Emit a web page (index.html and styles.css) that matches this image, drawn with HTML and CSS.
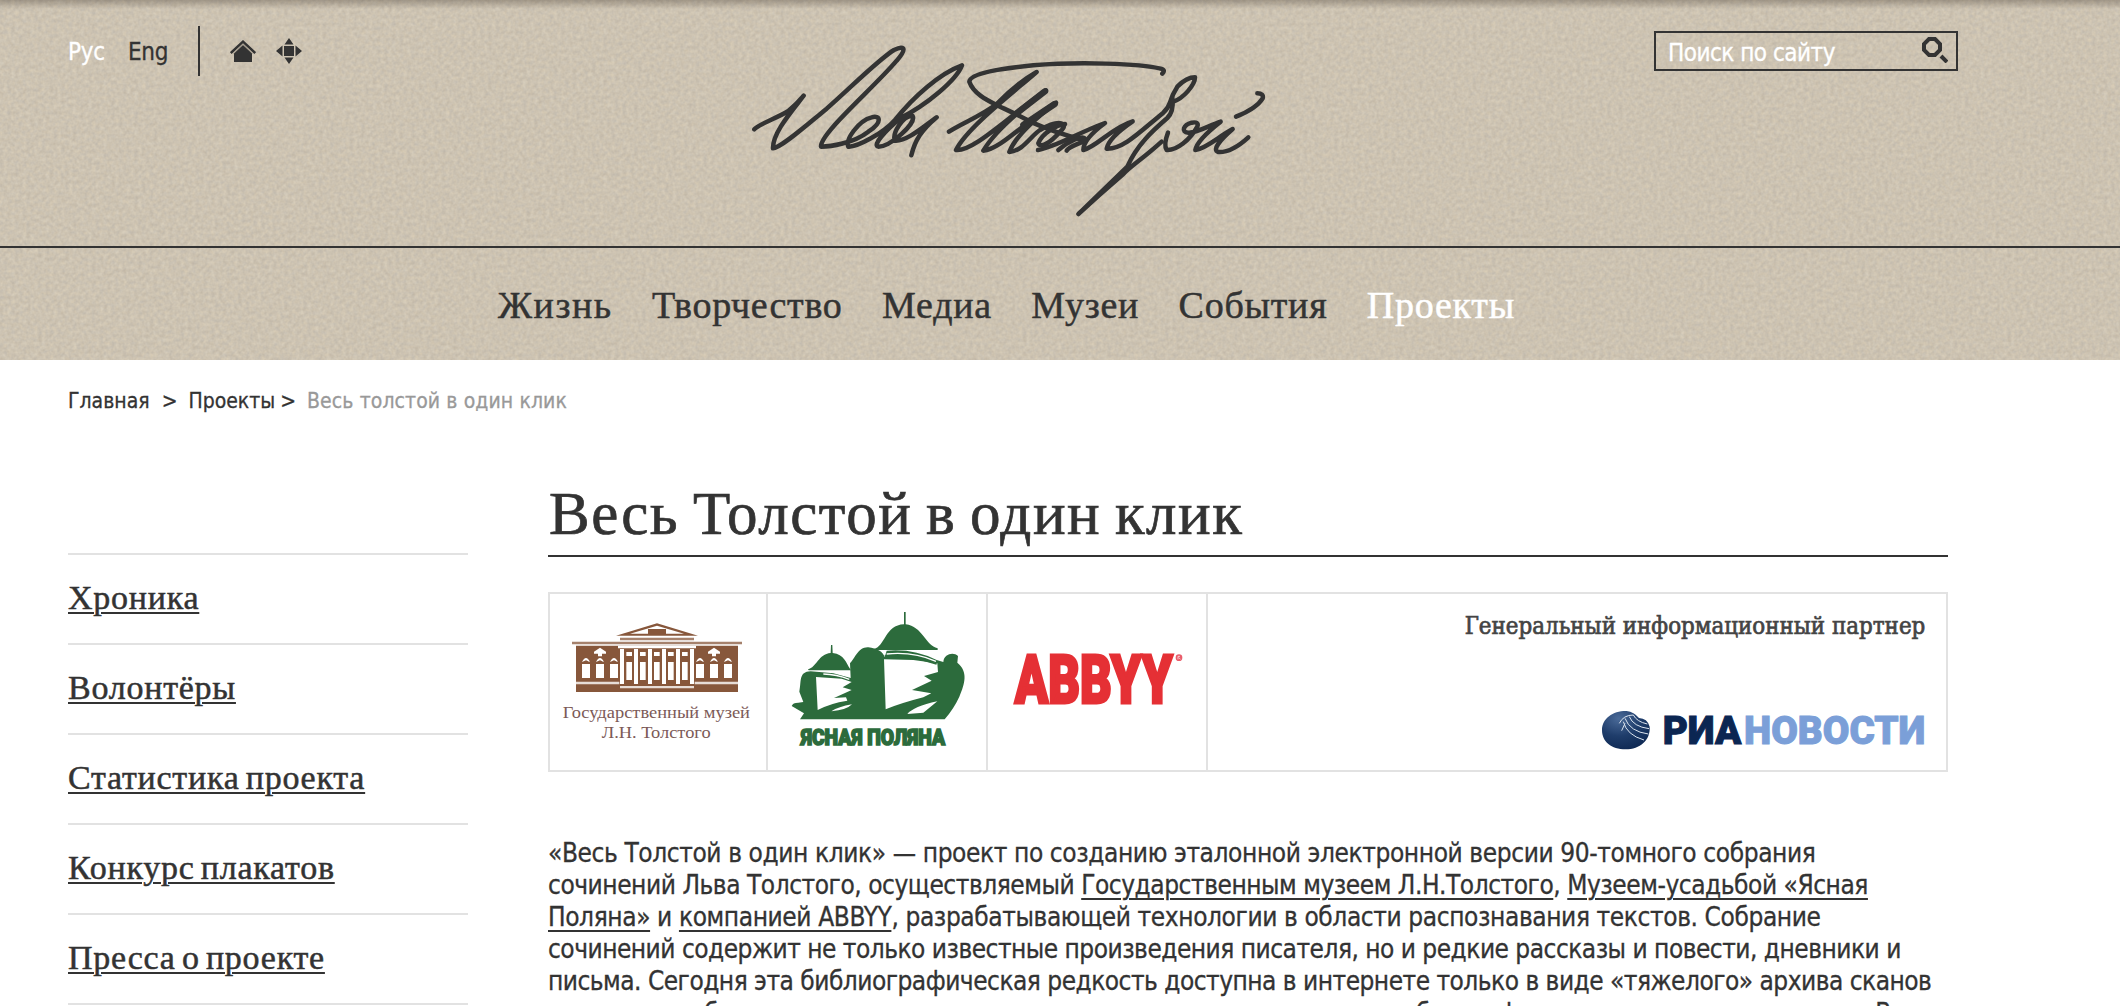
FILE: index.html
```html
<!DOCTYPE html>
<html lang="ru">
<head>
<meta charset="utf-8">
<title>Весь Толстой в один клик</title>
<link rel="stylesheet" href="styles.css">
</head>
<body>
<header class="header">
  <svg class="paper" aria-hidden="true">
    <filter id="grain" x="0" y="0" width="100%" height="100%" color-interpolation-filters="sRGB">
      <feTurbulence type="fractalNoise" baseFrequency="0.26" numOctaves="2" seed="4"/>
      <feColorMatrix values="0.12 0 0 0 0.742  0.11 0.02 0 0 0.699  0.08 0.05 0 0 0.632  0 0 0 0 1"/>
    </filter>
    <rect width="100%" height="100%" filter="url(#grain)"/>
  </svg>
  <div class="top">
    <div class="tools">
      <a class="lang lang-on">Рус</a>
      <a class="lang lang-en">Eng</a>
      <span class="split"></span>
      <svg class="ico-home" viewBox="0 0 26 22"><path d="M4 13.5 13 5l9 8.5V22H4z" fill="#333"/><path d="M.8 13 13 1.6 25.200 13" fill="none" stroke="#333" stroke-width="2.400"/><path d="M3 13.500 13 4.200 23 13.500" fill="none" stroke="#a39a8c" stroke-width="1"/></svg>
      <svg class="ico-map" viewBox="0 0 26 26" fill="#333"><path d="M8 8h10v10H8zM8.500 6.500 13 0l4.500 6.500zM8.500 19.500 13 26l4.500-6.500zM6.500 7.500v11L0 13zM19.500 7.500v11L26 13z"/></svg>
    </div>
    <svg class="signature" viewBox="0 0 1620 600" fill="none" stroke="#333" stroke-width="13.500" stroke-linecap="round" stroke-linejoin="round">
      <path d="M43 298C52 284 110 265 145 243Q170 222 191 197C150 250 98 310 99 355C125 352 200 285 260 236C340 165 420 85 462 60C500 42 497 62 470 92C400 175 240 310 243 350C270 350 340 340 385 305C430 275 420 255 395 262C355 272 315 330 325 350C350 352 430 310 465 270C520 200 600 130 666 106C650 150 560 225 480 265C440 300 395 345 415 350C450 350 530 280 518 258C490 255 455 310 465 332C500 335 550 290 590 262C545 300 525 330 514 376"/>
      <path d="M1267 131Q1278 120 1262 116C1200 100 1010 95 880 106C780 116 690 130 688 155C700 190 740 210 770 225S850 262 870 275Q950 310 1030 330"/>
      <path d="M627 305C665 280 720 260 770 222Q830 160 890 126C810 195 680 295 648 360C700 365 800 265 918 181C840 240 760 310 730 362C780 360 860 270 948 218C880 270 825 320 808 366C850 362 870 320 900 300C960 265 990 280 960 305C930 340 900 355 895 340C905 310 950 285 975 282"/>
      <path d="M894 360C950 350 1010 310 1095 279C1060 305 1030 335 1030 360C1070 350 1120 290 1178 274C1140 300 1105 330 1100 356C1150 358 1200 305 1270 248C1300 220 1280 220 1312 170Q1340 142 1365 142C1365 165 1330 205 1300 215"/>
      <path d="M955 360C990 330 1030 315 1035 326S990 345 980 362"/>
      <path d="M1297 205Q1302 245 1282 264C1240 300 1190 345 1162 410Q1100 470 1015 552Q1080 492 1150 432C1170 410 1210 385 1265 335"/>
      <path d="M1284 308Q1270 345 1280 360C1310 362 1350 330 1372 290Q1378 274 1355 278C1330 285 1322 306 1345 308S1410 285 1442 275C1410 300 1370 335 1366 360C1400 355 1435 320 1478 297C1440 330 1415 360 1435 366C1470 368 1500 345 1525 322M1488 260Q1550 235 1568 205Q1572 190 1552 190"/>
      <path d="M830 250 915 184M850 285 944 222" stroke-width="19"/>
    </svg>
    <div class="search"><span>Поиск по сайту</span>
      <svg class="ico-search" viewBox="0 0 26 26" fill="none" stroke="#333"><path d="M7 2h6l5 5v6l-5 5H7l-5-5V7z" stroke-width="4"/><path d="M19 19l6 6" stroke-width="4"/></svg>
    </div>
  </div>
  <nav class="nav">
    <a>Жизнь</a><a>Творчество</a><a>Медиа</a><a>Музеи</a><a>События</a><a class="on">Проекты</a>
  </nav>
</header>

<div class="crumbs"><a>Главная</a><i>&gt;</i><a>Проекты</a><i class="near">&gt;</i><span>Весь толстой в один клик</span></div>

<div class="columns">
  <ul class="side">
    <li><a>Хроника</a></li>
    <li><a>Волонтёры</a></li>
    <li><a>Статистика проекта</a></li>
    <li><a>Конкурс плакатов</a></li>
    <li><a>Пресса о проекте</a></li>
    <li></li>
  </ul>
  <main class="main">
    <h1>Весь Толстой в один клик</h1>
    <div class="partners">
      <svg viewBox="30 42 648 528">
        <g fill="#87573b">
          <path d="M228 167 351 130 474 167z"/><path d="M240 173h222v8H240zM96 185h510v8H96z" opacity=".75"/>
          <path d="M108 197h486v139H108z"/>
        </g>
        <g fill="#fff">
          <path d="M270 161 351 137l81 24h-54v-14h-54v14zM234 197h234v8H234zM240 207h12v105h-12zM282 207h12v105h-12zM324 207h12v105h-12zM366 207h12v105h-12zM408 207h12v105h-12zM450 207h12v105h-12z"/>
          <path d="M259 216h17v12h-17zM300 216h17v12h-17zM342 216h17v12h-17zM384 216h17v12h-17zM426 216h17v12h-17zM259 246h17v54h-17zM300 246h17v54h-17zM342 246h17v54h-17zM384 246h17v54h-17zM426 246h17v54h-17z"/>
          <path d="M126 252h24v42h-24zM168 252h24v42h-24zM210 252h24v42h-24zM468 252h24v42h-24zM510 252h24v42h-24zM552 252h24v42h-24z"/>
          <path d="M126 246q12-24 24 0l-12-5zM168 246q12-24 24 0l-12-5zM210 246q12-24 24 0l-12-5zM468 246q12-24 24 0l-12-5zM510 246q12-24 24 0l-12-5zM552 246q12-24 24 0l-12-5z"/>
          <path d="M162 215 180 203l18 12v6h-12v8h-12v-8h-12zM504 215l18-12 18 12v6h-12v8h-12v-8h-12z"/>
          <path d="M108 305h130v8H108zM464 305h130v8H464zM240 318h222v7H240z" opacity=".8"/>
        </g>
        <g class="museum"><text x="68" y="415" textLength="562" lengthAdjust="spacingAndGlyphs">Государственный музей</text><text x="185" y="474" textLength="327" lengthAdjust="spacingAndGlyphs">Л.Н. Толстого</text></g>
      </svg>
      <svg viewBox="684 42 654 528">
        <g fill="#2c6b3c">
          <path d="M1002 207C1035 200 1035 135 1092 133V96h5v37c50 5 60 65 96 72v5H1004zM804 268C830 262 835 222 872 219l1-24h4l1 24c35 4 40 30 52 47l3 5H806z"/>
          <path d="M780 418 792 400 755 378Q758 368 775 368L790 366 778 335C785 305 775 275 812 274L880 280 932 294 930 250C945 235 955 200 985 202 1010 205 1030 215 1034 232L1040 212Q1120 205 1190 240L1210 246C1212 222 1240 215 1254 228L1252 248C1285 275 1275 310 1258 350Q1242 385 1214 418z"/>
        </g>
        <g fill="#fff">
          <path d="M828 291 905 296 935 306 908 322 935 330 882 354 918 352 922 362Q870 370 833 390z"/>
          <path d="M1032 238 1120 240 1192 250 1194 276 1152 288 1175 302 1116 330 1174 340 1150 352Q1080 370 1037 388z"/>
          <path d="M874 394Q895 380 936 373 920 390 874 394zM1102 402Q1120 380 1192 364L1150 398z"/>
        </g>
        <path d="M1040 222Q1120 214 1188 244M850 282Q890 283 928 298" fill="none" stroke="#fff" stroke-width="4"/>
        <path d="M1034 228Q1110 224 1190 252" fill="none" stroke="#2c6b3c" stroke-width="5"/>
        <text class="polyana" x="783" y="494" textLength="432" lengthAdjust="spacingAndGlyphs">ЯСНАЯ ПОЛЯНА</text>
      </svg>
      <svg viewBox="24 42 654 528"><text class="abbyy" x="104" y="369" textLength="474" lengthAdjust="spacingAndGlyphs">ABBYY</text><circle cx="597" cy="233" r="10" fill="#e95c6a"/><path d="M594 238v-9h6M597 233l4 5" stroke="#fff" stroke-width="2" fill="none"/></svg>
      <svg viewBox="-696 42 2214 528">
        <defs><radialGradient id="globe" cx=".35" cy=".2" r=".9"><stop offset="0" stop-color="#4a6a98"/><stop offset=".5" stop-color="#1f3d6b"/><stop offset="1" stop-color="#0c2650"/></radialGradient></defs>
        <text class="partner" x="74" y="162" textLength="1382" lengthAdjust="spacingAndGlyphs">Генеральный информационный партнер</text>
        <path d="M486 450C486 415 520 392 560 393Q582 396 597 414 622 415 629 440C632 480 600 508 557 508S486 485 486 450z" fill="url(#globe)"/>
        <path d="M538 430Q550 405 580 405M555 415Q570 455 625 462M568 410Q580 440 627 446M550 425Q560 465 612 480M580 405Q590 425 622 432M545 452l10-22" fill="none" stroke="#dbe4ef" stroke-width="3"/>
        <text class="ria" x="668" y="492" textLength="236" lengthAdjust="spacingAndGlyphs">РИА</text>
        <text class="ria novosti" x="912" y="492" textLength="544" lengthAdjust="spacingAndGlyphs">НОВОСТИ</text>
      </svg>
    </div>
    <p class="text"><span class="open">«Весь Толстой в один клик» — проект по созданию эталонной электронной версии 90-томного собрания</span>
<span class="even">сочинений Льва Толстого, осуществляемый <u>Государственным музеем Л.Н.Толстого</u>, <u>Музеем-усадьбой «Ясная</u></span>
<span class="open"><u>Поляна»</u> и <u>компанией ABBYY</u>, разрабатывающей технологии в области распознавания текстов. Собрание</span>
<span class="tight">сочинений содержит не только известные произведения писателя, но и редкие рассказы и повести, дневники и</span>
<span class="tight">письма. Сегодня эта библиографическая редкость доступна в интернете только в виде «тяжелого» архива сканов</span>
<span class="open">страниц, необходимых для изучения наследия автора и написания его биографии и всего творческого пути. В</span></p>
  </main>
</div>
</body>
</html>
```
FILE: styles.css
```css
* { box-sizing: border-box; }
body { margin: 0; height: 1006px; overflow: hidden; background: #fff; color: #333; font-family: "DejaVu Sans Condensed", "DejaVu Sans", sans-serif; font-stretch: condensed; -webkit-text-stroke: .3px; }
svg { display: block; flex: none; -webkit-text-stroke: 0; }

.header { position: relative; height: 360px; }
.paper { position: absolute; inset: 0; width: 100%; height: 100%; z-index: -1; }
.header::before { content: ""; position: absolute; inset: 0 0 auto; height: 9px; background: linear-gradient(rgba(60, 50, 40, .32), rgba(60, 50, 40, 0)); }
.top { height: 248px; border-bottom: 2px solid #333; display: flex; align-items: flex-start; padding-left: 68px; }
.tools { display: flex; width: 672px; padding-top: 26px; }
.lang { font-size: 24px; line-height: 52px; letter-spacing: -.3px; }
.lang-on { color: #fff; width: 60px; }
.lang-en { width: 70px; }
.split { width: 2px; height: 50px; background: #333; }
.ico-home { width: 26px; height: 22px; margin: 14px 20px 0 30px; }
.ico-map { width: 26px; height: 26px; margin-top: 12px; }
.signature { width: 540px; height: 200px; margin-top: 30px; }
.search { display: flex; justify-content: space-between; width: 304px; height: 40px; margin: 31px 0 0 374px; border: 2px solid #333; padding: 0 8px 0 12px; color: #fff; font-size: 24px; line-height: 40px; letter-spacing: -.5px; white-space: nowrap; }
.ico-search { width: 26px; height: 26px; margin-top: 4px; }
.nav { display: flex; gap: 39.4px; padding-left: 498px; font: 38px/114px "Liberation Serif", serif; letter-spacing: .75px; -webkit-text-stroke: .5px; }
.nav a:first-child { letter-spacing: 1.5px; }
.nav .on { color: #fff; }

.crumbs { display: flex; padding: 27px 0 0 68px; height: 132px; font-size: 21px; line-height: 28px; }
.crumbs i { font-style: normal; margin: 0 11px 0 12px; }
.crumbs .near { margin: 0 11px 0 5px; }
.crumbs span { color: #999; letter-spacing: .1px; }

.columns { display: flex; gap: 80px; align-items: flex-start; padding-left: 68px; }
.side { list-style: none; margin: 61px 0 0; padding: 0; width: 400px; font: 34px/86px "Liberation Serif", serif; letter-spacing: .75px; word-spacing: -3px; -webkit-text-stroke: .5px; }
.side li { border-top: 2px solid #e2e2e2; height: 90px; }
.side a { text-decoration: underline; text-decoration-thickness: 2px; text-underline-offset: 3px; }
.main { width: 1400px; }
h1 { margin: 0; height: 65px; padding-left: 1px; border-bottom: 2px solid #333; font: 61px/43px "Liberation Serif", serif; letter-spacing: 1.5px; word-spacing: -3px; -webkit-text-stroke: .7px; white-space: nowrap; }
.partners { display: grid; grid-template-columns: 216px 218px 218px 738px; gap: 2px; height: 180px; margin-top: 35px; border: 2px solid #e2e2e2; background: linear-gradient(#e2e2e2, #e2e2e2) 216px 0/2px 100% no-repeat, linear-gradient(#e2e2e2, #e2e2e2) 436px 0/2px 100% no-repeat, linear-gradient(#e2e2e2, #e2e2e2) 656px 0/2px 100% no-repeat; }
.partners svg { width: 100%; height: 176px; }
.museum { font: 53px "Liberation Serif", serif; fill: #7c5a57; }
.polyana { font: 900 67px Roboto, sans-serif; fill: #2c6b3c; stroke: #2c6b3c; stroke-width: 5px; }
.abbyy { font: 900 202px Roboto, sans-serif; fill: #e53035; stroke: #e53035; stroke-width: 9px; }
.partner { font: 72px "DejaVu Serif Condensed", "DejaVu Serif", serif; font-stretch: condensed; fill: #444; stroke: #444; stroke-width: 2px; }
.ria { font: 900 118px Roboto, sans-serif; fill: #0b2652; stroke: #0b2652; stroke-width: 3px; }
.novosti { fill: #7b9fd8; stroke: #7b9fd8; }
.text { margin: 65px 0 0; font-size: 26px; line-height: 32px; white-space: pre; }
.text u { text-decoration-thickness: 2px; text-underline-offset: 4px; }
.open { letter-spacing: -.4px; }
.even { letter-spacing: -.46px; }
.tight { letter-spacing: -.51px; }
```
